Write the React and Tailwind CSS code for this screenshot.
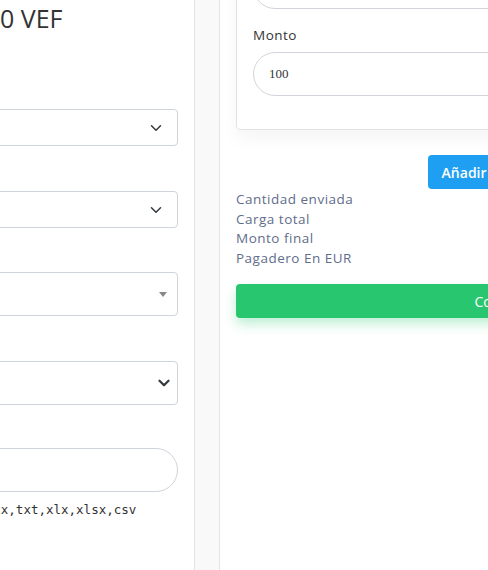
// Vista de envío: panel de datos (izquierda) y resumen del monto (derecha)
function Chevron({ bold }) {
  return (
    <svg width="12" height="12" viewBox="0 0 16 16" className="shrink-0">
      <path
        d="M2 5l6 6 6-6"
        fill="none"
        stroke="#343a40"
        strokeWidth={bold ? 3 : 2}
        strokeLinecap="round"
        strokeLinejoin="round"
      />
    </svg>
  );
}

export default function App() {
  return (
    <div className="w-[488px] h-[570px] overflow-hidden bg-white" style={{ fontFamily: '"Open Sans", sans-serif' }}>
      <div className="flex h-full">
        {/* Panel izquierdo (recortado) */}
        <div className="w-[195px] shrink-0 overflow-hidden border-r border-[#e4e4e4] bg-white">
          <div className="w-[434px] -ml-[240px] pr-[16px]">
            <h2 className="text-[25px] font-medium text-[#333] leading-[34px] pt-[1px] ml-[61px]">Total a pagar: 10 VEF</h2>

            {/* Campo país */}
            <div className="mt-[74px] h-[37px] rounded border border-[#ced4da] flex items-center justify-end pr-[15px]">
              <Chevron />
            </div>

            {/* Campo banco */}
            <div className="mt-[45px] h-[37px] rounded border border-[#ced4da] flex items-center justify-end pr-[15px]">
              <Chevron />
            </div>

            {/* Select2 */}
            <div className="mt-[44px] h-[44px] rounded border border-[#ced4da] flex items-center justify-end pr-[10px]">
              <div className="w-0 h-0 border-l-[4px] border-r-[4px] border-t-[5px] border-l-transparent border-r-transparent border-t-[#888]" />
            </div>

            {/* Select nativo */}
            <div className="mt-[45px] h-[44px] rounded border border-[#ced4da] flex items-center justify-end pr-[7px]">
              <Chevron bold />
            </div>

            {/* Archivo */}
            <div className="mt-[43px] h-[44px] rounded-full border border-[#ced4da]" />
            <p className="mt-[8px] text-[12.5px] leading-[20px] text-[#333]" style={{ fontFamily: '"DejaVu Sans Mono", monospace' }}>
              Archivos permitidos: pdf,doc,docx,txt,xlx,xlsx,csv
            </p>
          </div>
        </div>

        {/* Separación */}
        <div className="w-[25px] shrink-0 bg-[#f9f9f9] border-r border-[#e4e4e4]" />

        {/* Panel derecho */}
        <div className="w-[574px] shrink-0 bg-white px-[16px]">
          <div className="-mt-[53px] rounded border border-[#e3e3e3] px-[16px] pt-[17px] pb-[33px] shadow-[0_10px_18px_rgba(0,0,0,0.04)]">
            <div className="h-[44px] rounded-full border border-[#d1d5db]" />
            <label className="block mt-[16px] text-[13.5px] tracking-[0.5px] leading-[20px] text-[#333]">Monto</label>
            <div className="mt-[7px] h-[44px] rounded-full border border-[#d1d5db] flex items-center px-[15px]">
              <span className="text-[13px] text-[#333]" style={{ fontFamily: '"Liberation Serif", serif' }}>100</span>
            </div>
          </div>

          <div className="mt-[25px] flex justify-center">
            <button className="h-[34px] px-[14px] rounded bg-[#1e9ff2] text-white text-[14px] font-semibold">
              Añadir destinatario
            </button>
          </div>

          <div className="pt-[1px] text-[13.5px] tracking-[0.5px] leading-[19.5px] text-[#5f6d8a]">
            <div>Cantidad enviada</div>
            <div>Carga total</div>
            <div>Monto final</div>
            <div>Pagadero En EUR</div>
          </div>

          <button className="mt-[16px] w-full h-[34px] rounded bg-[#28c76f] text-white text-[14px] font-medium shadow-[0_6px_12px_rgba(40,199,111,0.3)]">
            Continuar
          </button>
        </div>
      </div>
    </div>
  );
}
